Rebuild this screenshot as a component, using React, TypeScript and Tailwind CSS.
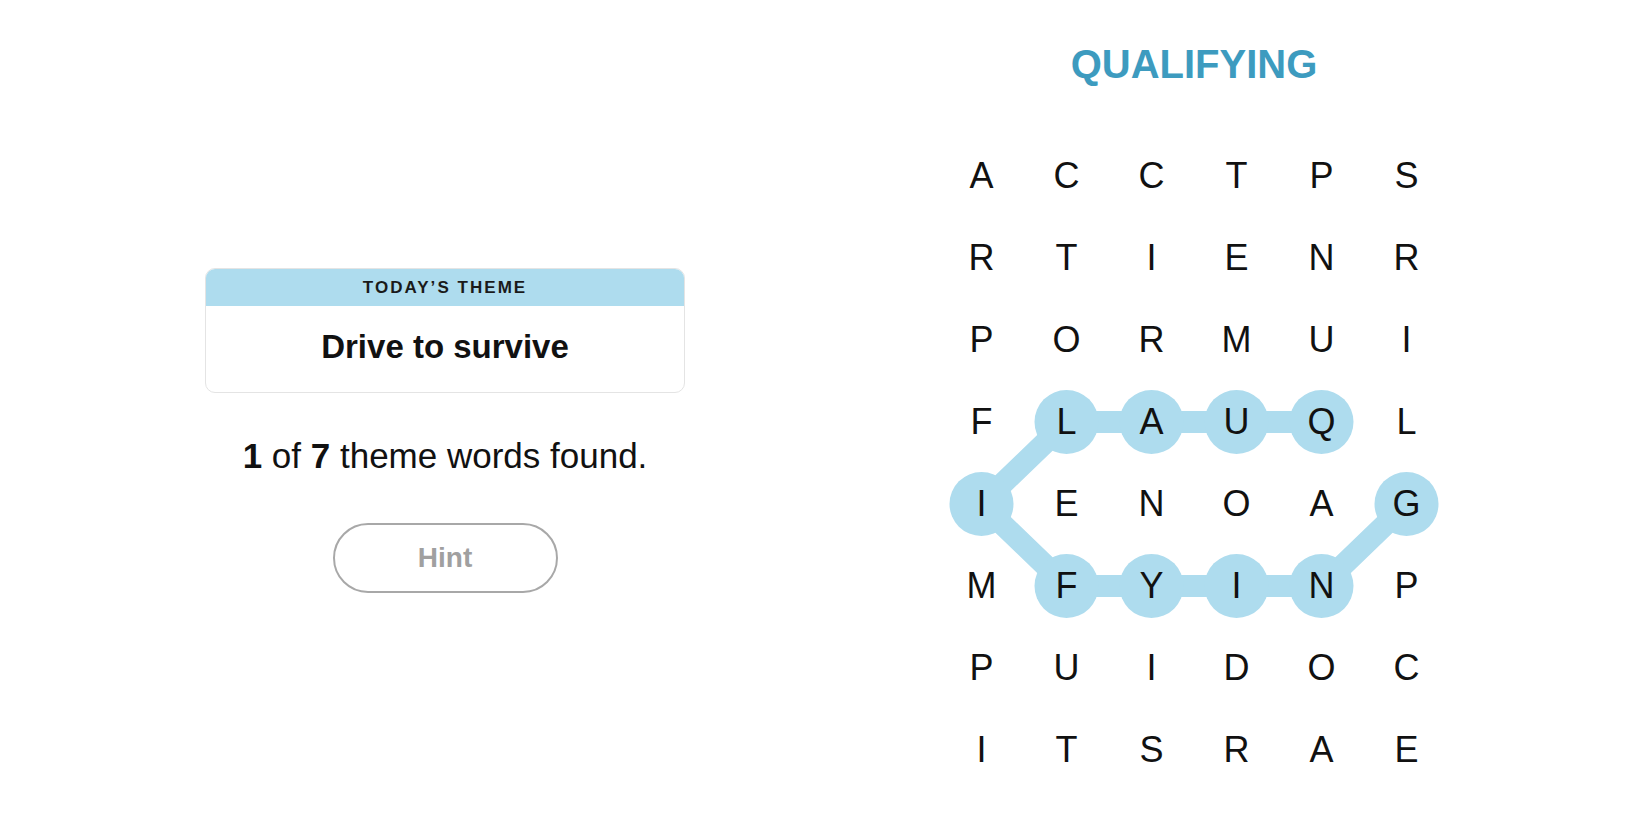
import React from "react";

const ROWS = [
  "ACCTPS",
  "RTIENR",
  "PORMUI",
  "FLAUQL",
  "IENOAG",
  "MFYINP",
  "PUIDOC",
  "ITSRAE",
];

// QUALIFYING path, as [row, col]
const PATH: [number, number][] = [
  [3, 4],
  [3, 3],
  [3, 2],
  [3, 1],
  [4, 0],
  [5, 1],
  [5, 2],
  [5, 3],
  [5, 4],
  [4, 5],
];

const CELL_W = 85;
const CELL_H = 82;
const HIGHLIGHT = "#aedcee";

const cx = (c: number) => c * CELL_W + CELL_W / 2;
const cy = (r: number) => r * CELL_H + CELL_H / 2;

const ThemeCard: React.FC = () => (
  <div className="w-[480px] rounded-[10px] border border-[#e4e4e4] overflow-hidden bg-white">
    <div className="h-[37px] bg-[#aedcee] flex items-center justify-center text-[17px] font-semibold tracking-[0.12em] text-[#1a1a1a]">
      TODAY’S THEME
    </div>
    <div className="h-[86px] flex items-center justify-center text-[33px] font-bold text-[#111] pb-[4px]">
      Drive to survive
    </div>
  </div>
);

const Board: React.FC = () => (
  <div className="relative w-[510px] h-[656px]">
    <svg className="absolute inset-0" width={510} height={656}>
      <polyline
        points={PATH.map(([r, c]) => `${cx(c)},${cy(r)}`).join(" ")}
        fill="none"
        stroke={HIGHLIGHT}
        strokeWidth={22}
        strokeLinejoin="round"
      />
      {PATH.map(([r, c]) => (
        <circle key={`${r}-${c}`} cx={cx(c)} cy={cy(r)} r={32} fill={HIGHLIGHT} />
      ))}
    </svg>
    <div className="relative grid grid-cols-6">
      {ROWS.map((row, r) =>
        row.split("").map((ch, c) => (
          <div
            key={`${r}-${c}`}
            className="h-[82px] flex items-center justify-center text-[36px] text-[#111]"
          >
            {ch}
          </div>
        ))
      )}
    </div>
  </div>
);

export default function App() {
  return (
    <div
      className="w-[1650px] h-[825px] bg-white flex"
      style={{ fontFamily: '"Liberation Sans", Arial, sans-serif' }}
    >
      <section className="w-[890px] flex flex-col items-center pt-[268px]">
        <ThemeCard />
        <div className="mt-[45px] text-[35px] text-[#111] leading-none">
          <span className="font-bold">1</span> of <span className="font-bold">7</span> theme words found.
        </div>
        <button className="mt-[50px] w-[225px] h-[70px] rounded-full border-2 border-[#a8a8a8] text-[28px] font-bold text-[#a0a0a0]">
          Hint
        </button>
      </section>
      <section className="flex-1 flex flex-col pl-[49px] pt-[38px]">
        <div className="w-[510px] text-center text-[40px] font-bold text-[#3d9bbf] leading-[52px]">
          QUALIFYING
        </div>
        <div className="mt-[45px]">
          <Board />
        </div>
      </section>
    </div>
  );
}
